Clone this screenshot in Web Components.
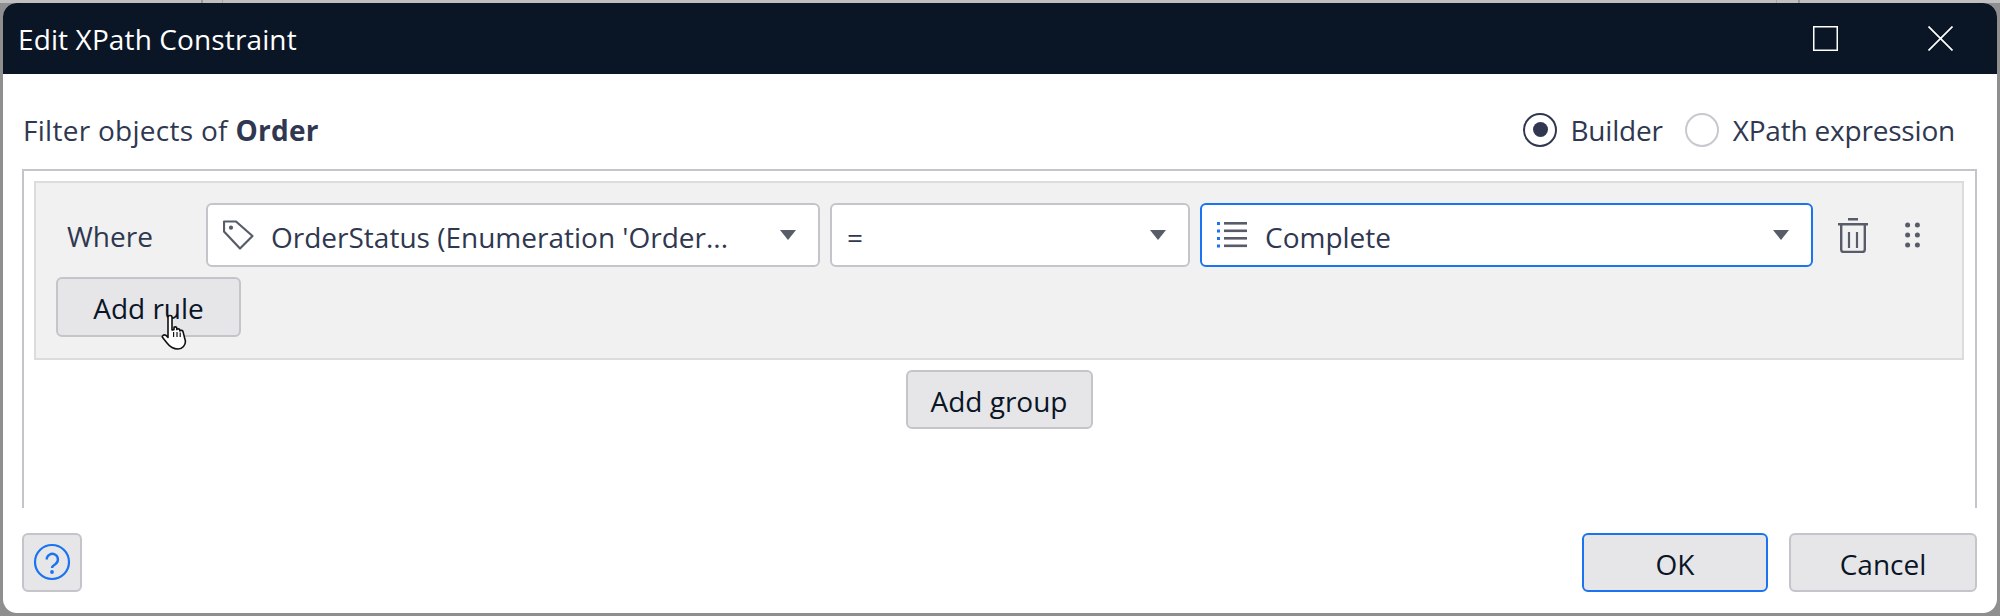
<!DOCTYPE html>
<html>
<head>
<meta charset="utf-8">
<title>Edit XPath Constraint</title>
<style>
  html, body { margin: 0; height: 100%; overflow: hidden; }
  body { background: #c4c4c4; font-family: "Open Sans", "Liberation Sans", sans-serif; }
</style>
</head>
<body>
<xpath-dialog heading="Edit XPath Constraint">
  <constraint-rule></constraint-rule>
</xpath-dialog>

<script>
const arrow = `<svg class="arrow" width="16" height="10" viewBox="0 0 16 10"><path d="M0 0H16L8 10Z" fill="#575c68"/></svg>`

class XpathDialog extends HTMLElement {
  constructor() {
    super()
    this.attachShadow({ mode: 'open' })
    this.shadowRoot.innerHTML = `
      <style>
        :host {
          display: block;
          width: 2000px;
          height: 616px;
          box-sizing: border-box;
          padding: 3px 3px 3px 3px;
          background:
            linear-gradient(to right, transparent 201px, #9a9a9a 201px, #9a9a9a 203px, transparent 203px, transparent 222px, #a8a8a8 222px, #a8a8a8 223px, transparent 223px, transparent 1776px, #a8a8a8 1776px, #a8a8a8 1777px, transparent 1777px, transparent 1798px, #9a9a9a 1798px, #9a9a9a 1800px, transparent 1800px) top / 100% 3px no-repeat,
            linear-gradient(#c0c0c0 3px, transparent 3px),
            linear-gradient(to top, #8f8f8f 4px, transparent 4px),
            #8f8f8f;
        }
        .win {
          height: 100%;
          display: flex;
          flex-direction: column;
          background: #fff;
          border-radius: 14px;
          overflow: hidden;
        }
        .bar {
          flex: none;
          height: 71px;
          display: flex;
          align-items: center;
          background: #0a1526;
          color: #fff;
          padding: 0 44px 0 15px;
          font-size: 28px;
        }
        .bar span { flex: 1; letter-spacing: 0.12px; }
        .bar svg { display: block; }
        .bar .max { margin-right: 90px; }
        .head {
          flex: none;
          height: 95px;
          box-sizing: border-box;
          display: flex;
          align-items: center;
          justify-content: space-between;
          padding: 16px 42px 0 20px;
          color: #2f3850;
          font-size: 28px;
        }
        .filter { letter-spacing: 0.28px; }
        .modes { display: flex; align-items: center; letter-spacing: -0.2px; }
        .panel {
          flex: none;
          height: 339px;
          box-sizing: border-box;
          margin: 0 20px 0 19px;
          border: 2px solid #c4c4ca;
          border-bottom: 0;
          padding: 10px 11px 0 10px;
        }
        .add-group { display: flex; justify-content: center; margin-top: 10px; }
        .foot {
          flex: none;
          display: flex;
          align-items: flex-start;
          padding: 25px 20px 0 19px;
        }
        .foot .gap { flex: 1; }
        .foot x-button + x-button { margin-left: 21px; }
      </style>
      <div class="win">
        <div class="bar">
          <span></span>
          <svg class="max" width="25" height="25" viewBox="0 0 25 25"><rect x="0.75" y="0.75" width="23.5" height="23.5" fill="none" stroke="#fff" stroke-width="1.5"/></svg>
          <svg width="25" height="25" viewBox="0 0 25 25"><path d="M0.5 0.5L24.5 24.5M24.5 0.5L0.5 24.5" fill="none" stroke="#fff" stroke-width="1.7"/></svg>
        </div>
        <div class="head">
          <div class="filter">Filter objects of <b>Order</b></div>
          <div class="modes">
            <x-radio checked style="gap:13px">Builder</x-radio>
            <x-radio style="margin-left:22px">XPath expression</x-radio>
          </div>
        </div>
        <div class="panel">
          <slot></slot>
          <div class="add-group"><x-button w="187">Add group</x-button></div>
        </div>
        <div class="foot">
          <x-button w="60">
            <svg width="38" height="38" viewBox="0 0 38 38" style="display:block;margin-top:-3px">
              <circle cx="19" cy="19" r="17" fill="none" stroke="#1a73f0" stroke-width="2.2"/>
              <path d="M13.7 16.5a5.6 5.6 0 1 1 8.6 4.7c-2 1.3-3.3 1.8-3.3 3.8" fill="none" stroke="#1a73f0" stroke-width="2.4"/>
              <circle cx="19" cy="29" r="1.9" fill="#1a73f0"/>
            </svg>
          </x-button>
          <div class="gap"></div>
          <x-button w="186" primary>OK</x-button>
          <x-button w="188">Cancel</x-button>
        </div>
      </div>
    `
    this.shadowRoot.querySelector('.bar span').textContent = this.getAttribute('heading')
  }
}

class XRadio extends HTMLElement {
  constructor() {
    super()
    this.attachShadow({ mode: 'open' })
    this.shadowRoot.innerHTML = `
      <style>
        :host { display: inline-flex; align-items: center; gap: 14px; }
        .dot {
          width: 34px;
          height: 34px;
          box-sizing: border-box;
          border-radius: 50%;
          border: 2px solid #c8c8ce;
          display: flex;
          align-items: center;
          justify-content: center;
        }
        :host([checked]) .dot { border-color: #2f3850; }
        :host([checked]) .dot::after {
          content: '';
          width: 15px;
          height: 15px;
          border-radius: 50%;
          background: #2f3850;
        }
      </style>
      <span class="dot"></span><slot></slot>
    `
  }
}

class XButton extends HTMLElement {
  constructor() {
    super()
    this.attachShadow({ mode: 'open' })
    this.shadowRoot.innerHTML = `
      <style>
        :host {
          display: inline-flex;
          align-items: center;
          justify-content: center;
          box-sizing: border-box;
          height: 59px;
          background: #e6e6e9;
          border: 2px solid #c4c4ca;
          border-radius: 6px;
          color: #0a1526;
          font-size: 28px;
        }
        :host([primary]) { border-color: #1a73f0; }
        .lbl { display: block; padding-top: 2px; }
      </style>
      <span class="lbl"><slot></slot></span>
    `
    this.style.width = this.getAttribute('w') + 'px'
  }
}

class XSelect extends HTMLElement {
  constructor() {
    super()
    this.attachShadow({ mode: 'open' })
    this.shadowRoot.innerHTML = `
      <style>
        :host {
          display: flex;
          align-items: center;
          box-sizing: border-box;
          height: 64px;
          background: #fff;
          border: 2px solid #c4c4ca;
          border-radius: 6px;
          color: #2f3850;
          font-size: 28px;
          padding-left: 15px;
          padding-right: 22px;
        }
        :host([focused]) { border-color: #1a73f0; }
        .txt { flex: 1; white-space: nowrap; padding-top: 3px; }
        slot[name=icon] { display: block; }
        ::slotted(svg) { display: block; margin-right: 16px; flex: none; }
        .arrow { flex: none; }
      </style>
      <slot name="icon"></slot>
      <span class="txt"><slot></slot></span>
      ${arrow}
    `
  }
}

class ConstraintRule extends HTMLElement {
  constructor() {
    super()
    this.attachShadow({ mode: 'open' })
    this.shadowRoot.innerHTML = `
      <style>
        :host {
          display: block;
          position: relative;
          box-sizing: border-box;
          height: 179px;
          background: #f1f1f1;
          border: 2px solid #dcdcdc;
          padding: 20px 0 0 21px;
          color: #2f3850;
          font-size: 28px;
        }
        .row { display: flex; align-items: center; }
        .where { width: 149px; padding: 1px 0 0 10px; box-sizing: border-box; }
        x-select + x-select { margin-left: 10px; }
        .tools { display: flex; align-items: center; margin-left: 25px; }
        .tools svg { display: block; }
        .tools .grip { margin-left: 37px; }
        .rule-btn { margin: 10px 0 0 -1px; height: 60px; }
        .cursor { position: absolute; left: 125px; top: 131px; }
      </style>
      <div class="row">
        <span class="where">Where</span>
        <x-select style="width:614px">
          <svg slot="icon" width="32" height="32" viewBox="0 0 32 32">
            <path d="M1 2.5H13L29.5 17L17 29.5L1 12.5Z" fill="none" stroke="#575c68" stroke-width="2.2" stroke-linejoin="round"/>
            <circle cx="8" cy="8.7" r="2.1" fill="#575c68"/>
          </svg>
          OrderStatus (Enumeration 'Order...
        </x-select>
        <x-select style="width:360px">=</x-select>
        <x-select style="width:613px" focused>
          <svg slot="icon" width="32" height="28" viewBox="0 0 32 28">
            <g fill="#1a73f0"><rect x="0" y="1" width="3" height="3"/><rect x="0" y="8.5" width="3" height="3"/><rect x="0" y="16" width="3" height="3"/><rect x="0" y="23.5" width="3" height="3"/></g>
            <g fill="#575c68"><rect x="7" y="1" width="23" height="2.6"/><rect x="7" y="8.5" width="23" height="2.6"/><rect x="7" y="16" width="23" height="2.6"/><rect x="7" y="23.5" width="23" height="2.6"/></g>
          </svg>
          Complete
        </x-select>
        <div class="tools">
          <svg width="30" height="35" viewBox="0 0 30 35" fill="none" stroke="#575c68">
            <path d="M10 1.2H20" stroke-width="2.4"/>
            <path d="M0 6.2H30" stroke-width="2.4"/>
            <path d="M3.2 6V31.5Q3.2 34 5.7 34H24.3Q26.8 34 26.8 31.5V6" stroke-width="2.4"/>
            <path d="M11 14V30M19 14V30" stroke-width="2.2"/>
          </svg>
          <svg class="grip" width="15" height="26" viewBox="0 0 15 26" fill="#575c68">
            <circle cx="2.6" cy="3" r="2.5"/><circle cx="12.4" cy="3" r="2.5"/>
            <circle cx="2.6" cy="13" r="2.5"/><circle cx="12.4" cy="13" r="2.5"/>
            <circle cx="2.6" cy="23" r="2.5"/><circle cx="12.4" cy="23" r="2.5"/>
          </svg>
        </div>
      </div>
      <x-button class="rule-btn" w="185" style="display:flex">Add rule</x-button>
      <svg class="cursor" width="28" height="36" viewBox="0 0 28 36">
        <path d="M7 3.2C7 1 11 1 11 3.2V16L13 15.6V13.6C13 12.6 15.6 12.6 15.8 13.8V15.6C16 14.6 18.6 14.6 18.8 15.8V17C19.2 16 21.8 16.2 22 17.6L24.4 27C24.6 31 21.6 35 17 35C11.5 35 9 33 6 29L1.6 23.6C0.6 21.8 2.8 20 5 21.4L7 23.4Z" fill="#fff" stroke="#111" stroke-width="1.6" stroke-linejoin="round"/>
        <path d="M12.6 18V23M16 18V23M19.2 18.6V23" stroke="#111" stroke-width="1.2" fill="none"/>
      </svg>
    `
  }
}

customElements.define('x-radio', XRadio)
customElements.define('x-button', XButton)
customElements.define('x-select', XSelect)
customElements.define('constraint-rule', ConstraintRule)
customElements.define('xpath-dialog', XpathDialog)
</script>
</body>
</html>
